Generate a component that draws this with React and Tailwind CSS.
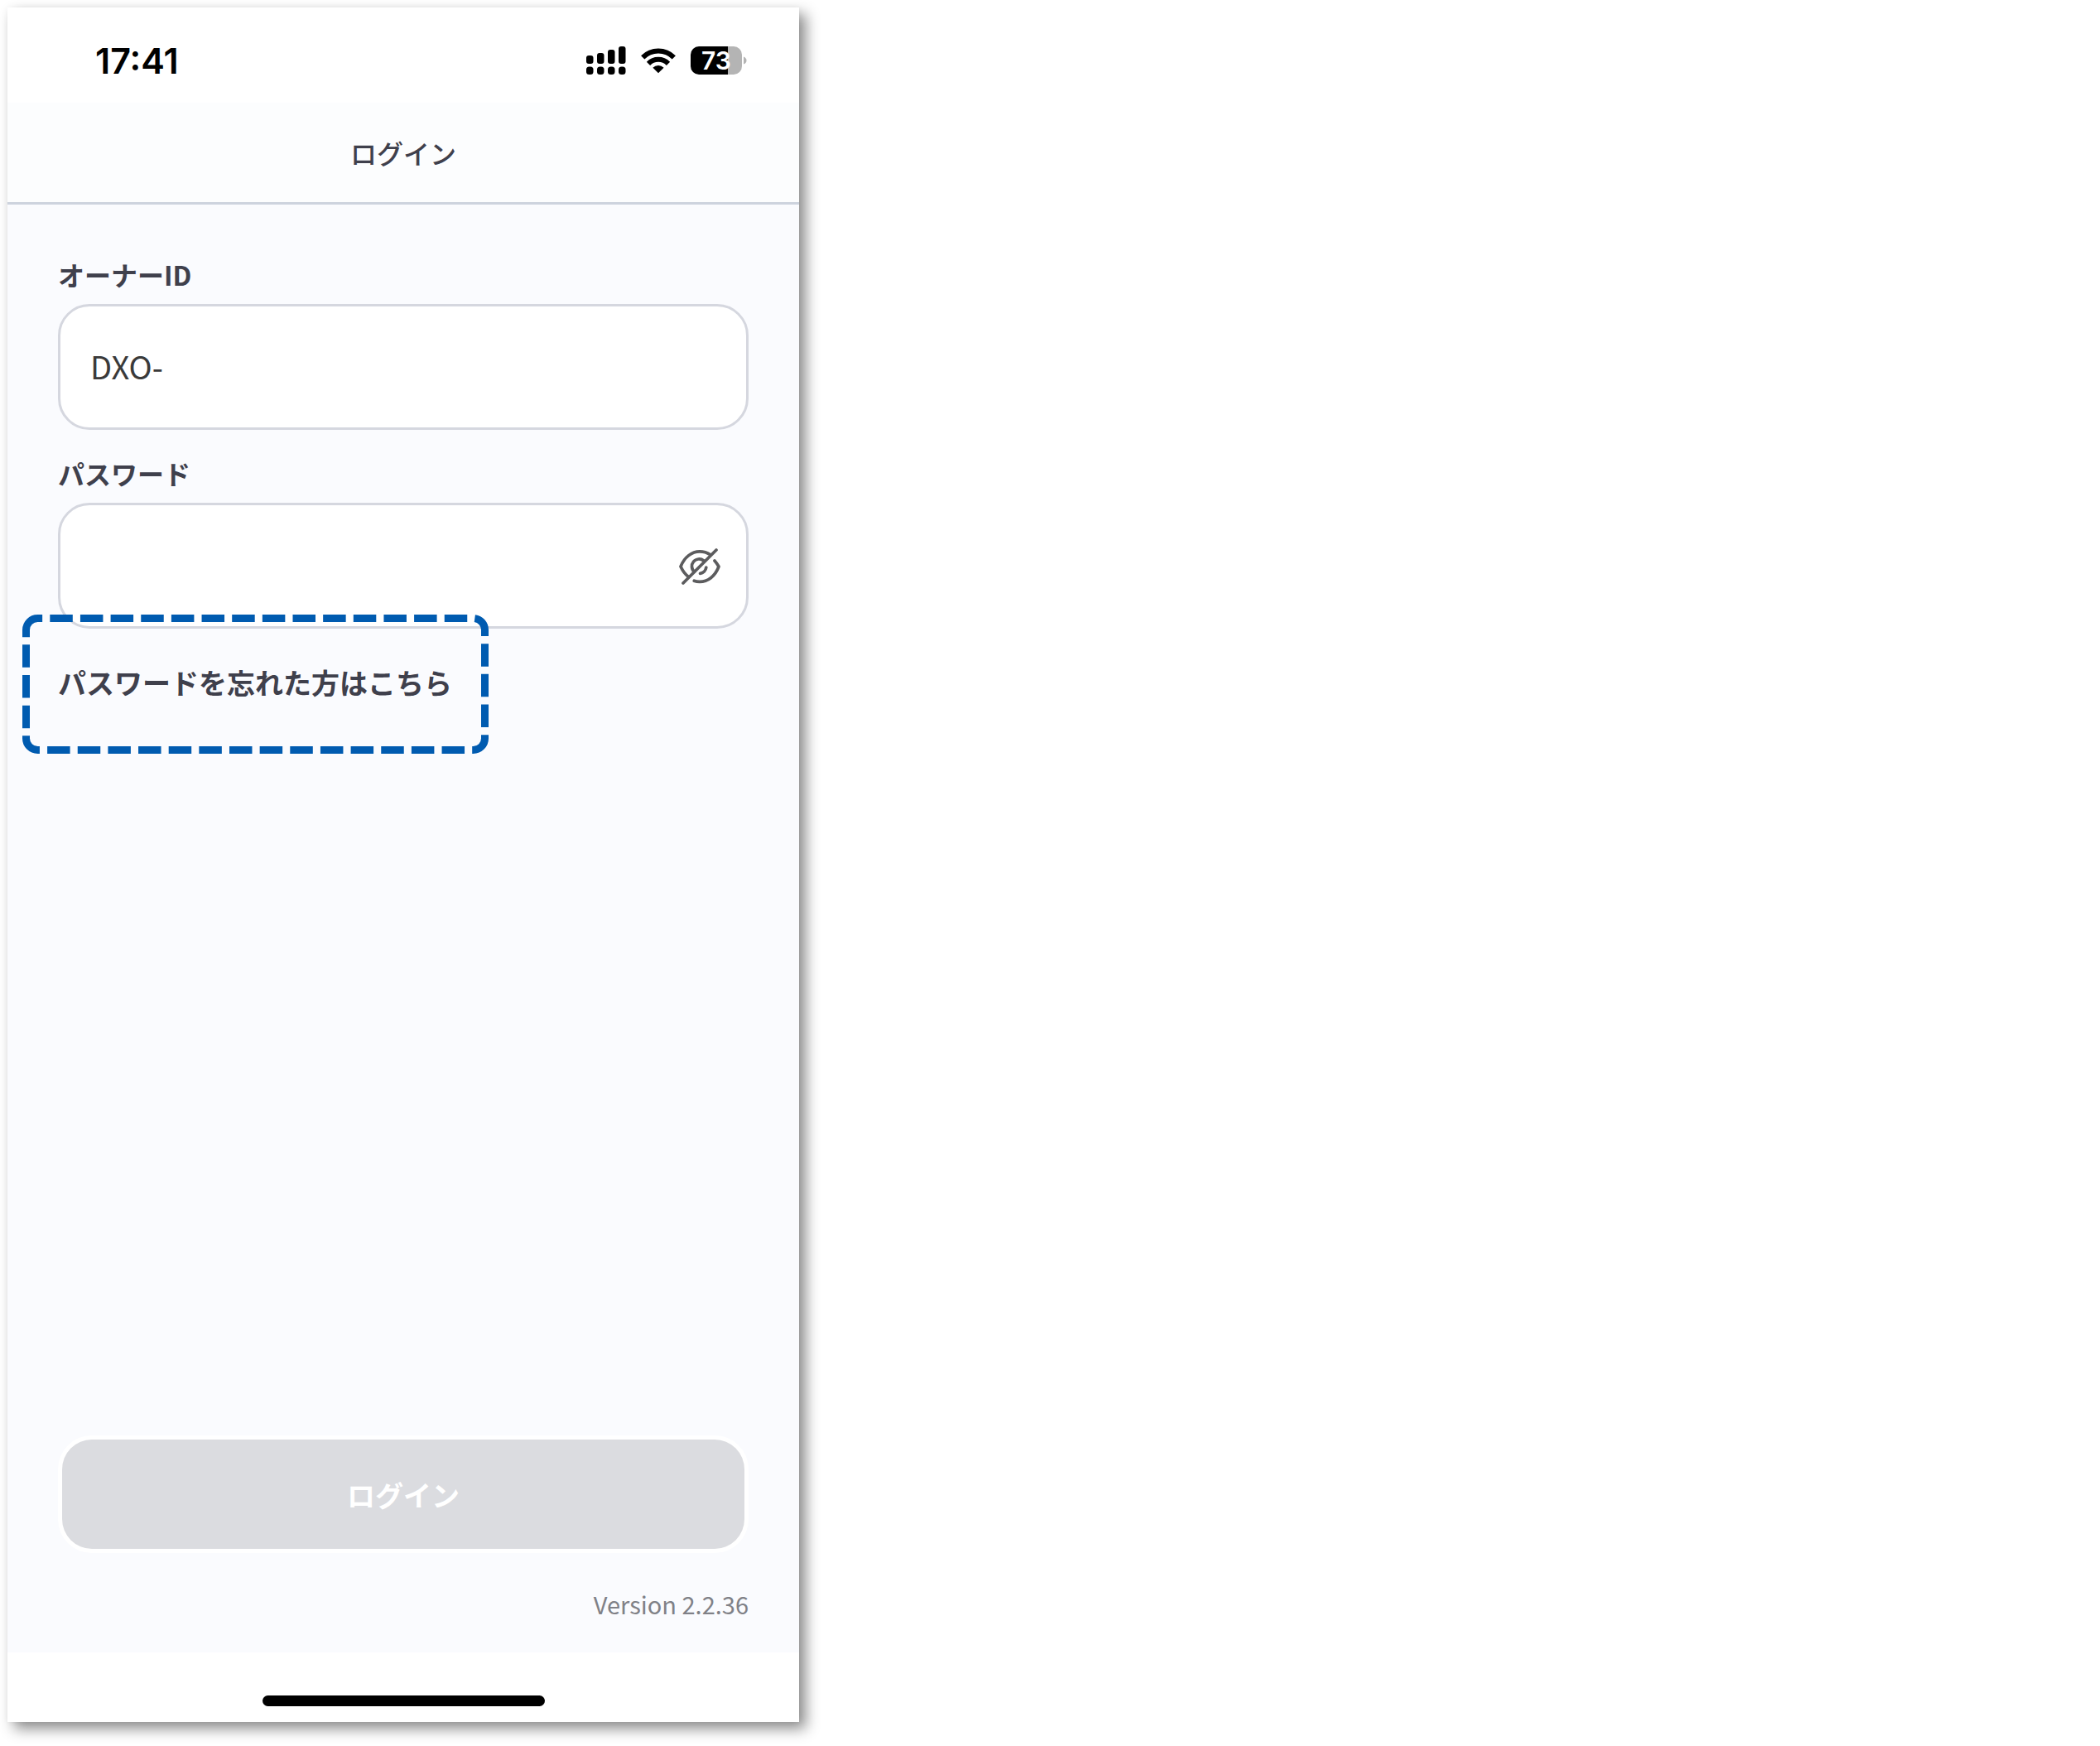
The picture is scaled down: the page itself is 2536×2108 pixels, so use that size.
import { useState } from "react";

const BARS = [
  { x: 0, top: 11 },
  { x: 13, top: 8 },
  { x: 26, top: 4 },
  { x: 39, top: 0 },
];

function SignalIcon() {
  return (
    <svg width="48" height="34" viewBox="0 0 48 34" aria-hidden="true">
      {BARS.map(({ x, top }) => (
        <g key={x}>
          <rect x={x} y={top} width="8.5" height={21 - top} rx="3" />
          <rect x={x} y="24.5" width="8.5" height="9.5" rx="3.5" />
        </g>
      ))}
    </svg>
  );
}

function WifiIcon() {
  return (
    <svg width="42" height="32" viewBox="0 0 42 32" fill="none" stroke="#000" strokeWidth="6" aria-hidden="true">
      <path d="M2.2 12.4A26.5 26.5 0 0 1 39.8 12.4" />
      <path d="M9 19.8A17 17 0 0 1 33 19.8" />
      <path d="M21 31.2l-6.6-6.5a9.2 9.2 0 0 1 13.2 0z" fill="#000" stroke="none" />
    </svg>
  );
}

function Battery() {
  return (
    <div className="flex items-center gap-[2px]">
      <div className="flex h-[34px] w-[62px] items-center justify-center rounded-[10px] bg-[linear-gradient(to_right,#000_73%,#b4b4b4_73%)] text-[30px] leading-none font-semibold text-white">
        73
      </div>
      <svg width="4" height="10" viewBox="0 0 4 10" fill="#b4b4b4" aria-hidden="true">
        <path d="M0 0.5Q3.5 2 3.5 5Q3.5 8 0 9.5z" />
      </svg>
    </div>
  );
}

function EyeOffIcon() {
  return (
    <svg
      width="50"
      height="44"
      viewBox="0 0 50 44"
      fill="none"
      stroke="#5c5c5e"
      strokeWidth="3.7"
      strokeLinecap="round"
      strokeLinejoin="round"
      aria-hidden="true"
    >
      <path d="M5 42L45 2" />
      <path d="M37.5 7.5C33.5 4.8 29.2 3.8 25 3.8C15.5 3.8 6.5 10.5 2 22C4.5 27.5 7.5 31.5 11.5 34.5" />
      <path d="M43 15C44.8 17 46.5 19.5 48 22C43.5 34 34.5 40.4 25 40.4C22.6 40.4 20.3 40 18.3 39.2" />
      <path d="M18.6 28.4A8.5 8.500 0 0 1 29.8 15" />
      <path d="M32.8 23A8.5 8.5 0 0 1 25.5 30.3" />
    </svg>
  );
}

function DashedFrame() {
  return (
    <svg
      className="pointer-events-none absolute -top-[58px] -left-[43px]"
      width="563"
      height="168"
      viewBox="0 0 563 168"
      fill="none"
      stroke="#005bb0"
      strokeWidth="9"
      strokeDasharray="27.5 9.15"
      aria-hidden="true"
    >
      <path d="M4.5 18.5A14 14 0 0 1 18.5 4.5H544.5A14 14 0 0 1 558.5 18.5V149.5A14 14 0 0 1 544.5 163.5H18.5A14 14 0 0 1 4.5 149.5Z" />
    </svg>
  );
}

const FIELD =
  "h-[152px] w-full rounded-[38px] border-[3px] border-[#d5d7df] bg-white px-[36px] pb-[4px] text-[38px] text-[#3a3a3a] outline-none";

export default function App() {
  const [ownerId, setOwnerId] = useState("DXO-");
  const [password, setPassword] = useState("");
  const [visible, setVisible] = useState(false);

  return (
    <div className="flex min-h-screen bg-white px-[9px] pt-[9px] pb-[29px] font-['Noto_Sans_CJK_JP',sans-serif] text-[#3f404c]">
      <div className="flex w-full max-w-[956px] flex-col bg-white shadow-[8px_8px_16px_rgba(0,0,0,0.45),0_0_8px_rgba(0,0,0,0.04)]">
        <div className="flex h-[115px] shrink-0 items-center justify-between pr-[63px] pb-[12px] pl-[106px] font-['Inter',sans-serif] text-black">
          <time className="pt-[24px] text-[43px] leading-[42px] font-semibold">17:41</time>
          <div className="flex items-center gap-[18px] pt-[24px]">
            <SignalIcon />
            <WifiIcon />
            <Battery />
          </div>
        </div>

        <header className="flex h-[123px] shrink-0 items-center justify-center border-b-[3px] border-[#cdd3de] bg-[#fcfdfe]">
          <h1 className="text-[32px] leading-[48px] font-medium">ログイン</h1>
        </header>

        <form
          className="flex flex-1 flex-col bg-[#fafbfe] px-[61px] pt-[60px] pb-[39px]"
          onSubmit={(e) => e.preventDefault()}
        >
          <label htmlFor="owner-id" className="mb-[12px] text-[32px] leading-[48px] font-bold">
            オーナーID
          </label>
          <input
            id="owner-id"
            type="text"
            className={FIELD}
            value={ownerId}
            onChange={(e) => setOwnerId(e.target.value)}
          />

          <label htmlFor="password" className="mt-[28px] mb-[12px] text-[32px] leading-[48px] font-bold">
            パスワード
          </label>
          <div className="relative">
            <input
              id="password"
              type={visible ? "text" : "password"}
              className={FIELD}
              value={password}
              onChange={(e) => setPassword(e.target.value)}
            />
            <button
              type="button"
              aria-label="パスワードを表示"
              className="absolute inset-y-0 right-[34px] flex items-center pt-[2px]"
              onClick={() => setVisible(!visible)}
            >
              <EyeOffIcon />
            </button>
          </div>

          <div className="relative mt-[41px] self-start">
            <a href="#reset" className="text-[34px] leading-[48px] font-bold">
              パスワードを忘れた方はこちら
            </a>
            <DashedFrame />
          </div>

          <button
            type="submit"
            className="mx-[5px] mt-auto h-[132px] shrink-0 rounded-[36px] bg-[#dbdce0] text-[34px] font-bold text-white ring-[5px] ring-white"
          >
            ログイン
          </button>
          <p className="mt-[46px] text-right text-[29px] leading-[40px] text-[#808187]">Version 2.2.36</p>
        </form>

        <div className="flex h-[84px] shrink-0 items-end justify-center pb-[19px]">
          <div className="h-[13px] w-[341px] rounded-full bg-black" />
        </div>
      </div>
    </div>
  );
}
